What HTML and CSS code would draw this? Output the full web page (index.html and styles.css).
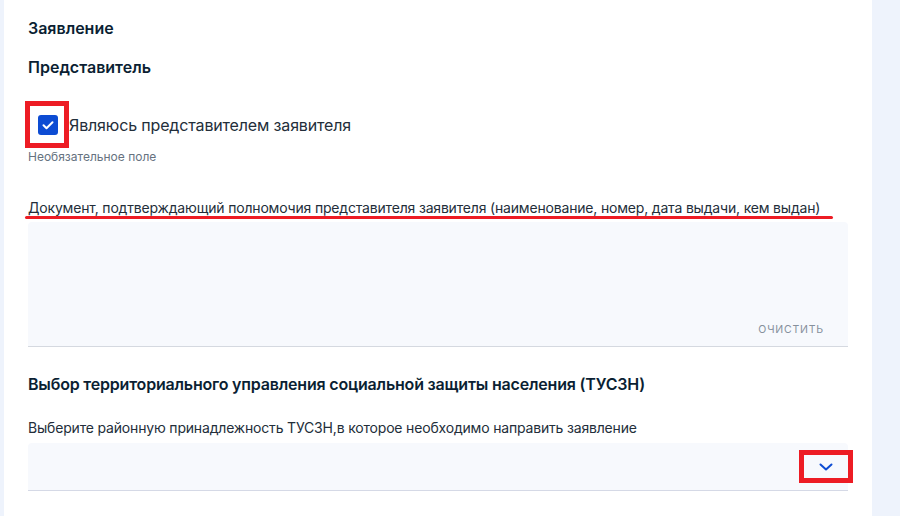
FILE: index.html
```html
<!DOCTYPE html>
<html>
<head lang="ru">
  <meta charset="UTF-8">
  <title>Заявление</title>
  <link rel="stylesheet" href="styles.css">
</head>
<body>
  <div class="page">
    <h2 class="title">Заявление</h2>
    <h3 class="subtitle">Представитель</h3>

    <div class="check-row">
      <span class="mark">
        <span class="checkbox">
          <svg width="14" height="14" viewBox="0 0 14 14"><path d="M2.5 7.2l3 3 6-6" fill="none" stroke="#fff" stroke-width="2" stroke-linecap="round" stroke-linejoin="round"/></svg>
        </span>
      </span>
      <span class="check-text">Являюсь представителем заявителя</span>
    </div>
    <div class="hint">Необязательное поле</div>

    <div class="field-label">Документ, подтверждающий полномочия представителя заявителя (наименование, номер, дата выдачи, кем выдан)</div>
    <div class="underline"></div>
    <div class="textarea">
      <span class="clear">очистить</span>
    </div>

    <h3 class="section">Выбор территориального управления социальной защиты населения (ТУСЗН)</h3>
    <div class="select-label">Выберите районную принадлежность ТУСЗН,в которое необходимо направить заявление</div>
    <div class="select">
      <span class="arrow-box">
        <svg width="14" height="8" viewBox="0 0 14 8"><path d="M1.5 1.5l5.5 5 5.5-5" fill="none" stroke="#0d4cd3" stroke-width="2" stroke-linecap="round" stroke-linejoin="round"/></svg>
      </span>
    </div>
  </div>
</body>
</html>
```

FILE: styles.css
```css
* {
  margin: 0;
  padding: 0;
  box-sizing: border-box;
}
body {
  background: #eef3fc;
  font-family: Inter, "Noto Sans", sans-serif;
  color: #0b1f33;
}
.page {
  margin-left: 4px;
  width: 868px;
  min-height: 516px;
  background: #fff;
  padding: 18px 24px 0;
}
.title,
.subtitle,
.section {
  font-size: 16px;
  font-weight: 600;
  line-height: 20px;
  color: #0b1f33;
}
.subtitle {
  margin-top: 19px;
}
.check-row {
  display: flex;
  align-items: center;
  margin-top: 24px;
  margin-left: -3px;
}
.mark {
  display: inline-block;
  border: 5px solid #ed1c24;
  padding: 9px 6px 8px 8px;
}
.checkbox {
  display: flex;
  align-items: center;
  justify-content: center;
  width: 20px;
  height: 20px;
  border-radius: 3px;
  background: #0d4cd3;
}
.check-text {
  font-size: 16px;
  line-height: 20px;
  letter-spacing: -0.15px;
  color: #232e3a;
}
.hint {
  margin-top: 1px;
  font-size: 12px;
  line-height: 16px;
  color: #66727f;
}
.field-label {
  margin-top: 35px;
  font-size: 14px;
  line-height: 16px;
  letter-spacing: -0.18px;
  color: #232e3a;
}
.underline {
  width: 808px;
  height: 3px;
  margin-left: -3px;
  border-radius: 2px;
  background: #ed1c24;
}
.textarea {
  margin-top: 3px;
  height: 125px;
  background: #f7f9fd;
  border-bottom: 1px solid #d5d9e0;
  border-radius: 4px 4px 0 0;
  display: flex;
  align-items: flex-end;
  justify-content: flex-end;
  padding: 0 24px 10px 0;
}
.clear {
  font-size: 10.5px;
  line-height: 12px;
  letter-spacing: 0.8px;
  text-transform: uppercase;
  color: #86909c;
}
.section {
  margin-top: 27px;
  letter-spacing: -0.19px;
}
.select-label {
  margin-top: 24px;
  font-size: 14px;
  line-height: 20px;
  letter-spacing: -0.18px;
  color: #232e3a;
}
.select {
  margin-top: 5px;
  height: 48px;
  background: #f7f9fd;
  border-bottom: 1px solid #d5d9e6;
  border-radius: 4px 4px 0 0;
  display: flex;
  align-items: center;
  justify-content: flex-end;
}
.arrow-box {
  display: flex;
  align-items: center;
  justify-content: center;
  width: 54px;
  height: 33px;
  margin-right: -5px;
  border: 5px solid #ed1c24;
}
```
